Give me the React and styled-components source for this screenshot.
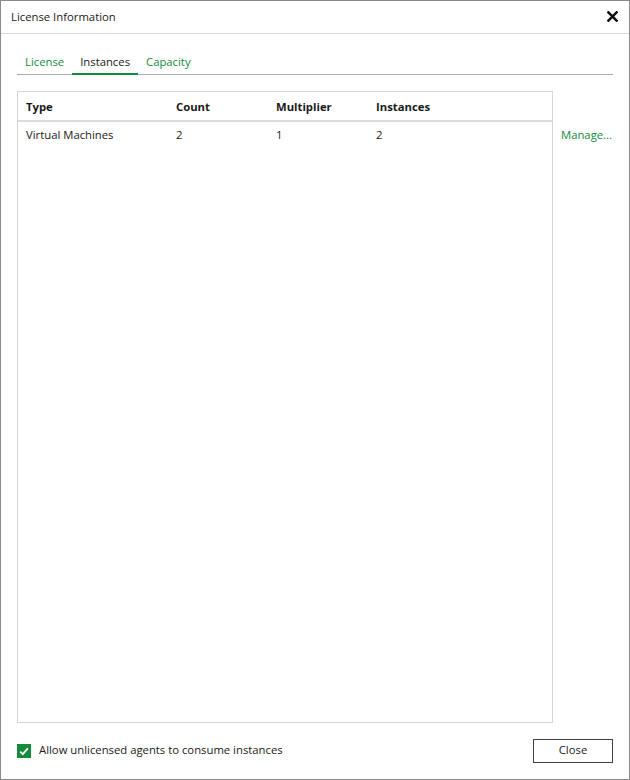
import React from "react";
import styled, { createGlobalStyle } from "styled-components";

const GREEN = "#138a3a";

const Global = createGlobalStyle`
  html, body { margin: 0; padding: 0; background: #fff; }
  * { box-sizing: border-box; }
  body { font-family: "Open Sans", "Noto Sans", sans-serif; font-size: 11.3px; color: #1a1a1a; }
`;

const Window = styled.div`
  width: 630px;
  height: 780px;
  border: 1px solid #8a8a8a;
  display: flex;
  flex-direction: column;
  background: #fff;
`;

const TitleBar = styled.div`
  height: 33px;
  flex: none;
  border-bottom: 1px solid #d9d9d9;
  display: flex;
  align-items: center;
  justify-content: space-between;
  padding: 0 11px 2px 10px;
`;

const Title = styled.span`
  color: #1a1a1a;
`;

const CloseX = styled.button`
  border: none;
  background: none;
  padding: 0;
  width: 11px;
  height: 11px;
  display: flex;
  cursor: pointer;
`;

const Body = styled.div`
  flex: 1;
  display: flex;
  flex-direction: column;
  padding: 18px 16px 0 16px;
  min-height: 0;
`;

const Tabs = styled.div`
  display: flex;
  border-bottom: 1px solid #ababab;
  height: 23px;
  flex: none;
`;

const Tab = styled.div`
  padding: 0 8px;
  height: 23px;
  line-height: 20px;
  color: ${(p) => (p.$active ? "#1a1a1a" : GREEN)};
  border-bottom: 2px solid ${(p) => (p.$active ? GREEN : "transparent")};
  margin-bottom: -1px;
  cursor: pointer;
`;

const Main = styled.div`
  flex: 1;
  display: flex;
  gap: 8px;
  margin-top: 16px;
  min-height: 0;
`;

const Table = styled.div`
  width: 536px;
  flex: none;
  border: 1px solid #d4d4d4;
  display: flex;
  flex-direction: column;
`;

const Row = styled.div`
  display: grid;
  grid-template-columns: 150px 100px 100px 1fr;
  align-items: center;
  padding-left: 8px;
  padding-top: ${(p) => (p.$header ? "0" : "2px")};
  height: ${(p) => (p.$header ? "30px" : "23px")};
  border-bottom: ${(p) => (p.$header ? "2px solid #dcdcdc" : "none")};
  font-weight: ${(p) => (p.$header ? 700 : 400)};
  flex: none;
`;

const Cell = styled.span`
  white-space: nowrap;
`;

const Side = styled.div`
  padding-top: 33px;
`;

const Link = styled.a`
  color: ${GREEN};
  text-decoration: none;
  cursor: pointer;
  display: block;
  line-height: 22px;
`;

const Footer = styled.div`
  flex: none;
  height: 56px;
  display: flex;
  align-items: center;
  justify-content: space-between;
`;

const CheckLabel = styled.label`
  display: flex;
  align-items: center;
  gap: 8px;
  line-height: 14px;
`;

const Text = styled.span`
  margin-top: -3px;
`;

const Box = styled.span`
  width: 14px;
  height: 14px;
  background: #158a3b;
  display: flex;
  align-items: center;
  justify-content: center;
`;

const Button = styled.button`
  width: 80px;
  height: 24px;
  border: 1px solid #3f3f3f;
  background: #fff;
  font-family: inherit;
  font-size: 11.3px;
  color: #1a1a1a;
  padding: 0 0 3px;
`;

export default function App() {
  const rows = [["Virtual Machines", "2", "1", "2"]];
  return (
    <>
      <Global />
      <Window>
        <TitleBar>
          <Title>License Information</Title>
          <CloseX aria-label="Close">
            <svg width="11" height="11" viewBox="0 0 11 11">
              <path d="M1.4 1.4 L9.6 9.6 M9.6 1.4 L1.4 9.6" stroke="#111" strokeWidth="2.5" strokeLinecap="square" />
            </svg>
          </CloseX>
        </TitleBar>
        <Body>
          <Tabs>
            <Tab>License</Tab>
            <Tab $active>Instances</Tab>
            <Tab>Capacity</Tab>
          </Tabs>
          <Main>
            <Table>
              <Row $header>
                <Cell>Type</Cell>
                <Cell>Count</Cell>
                <Cell>Multiplier</Cell>
                <Cell>Instances</Cell>
              </Row>
              {rows.map((r) => (
                <Row key={r[0]}>
                  {r.map((c, i) => (
                    <Cell key={i}>{c}</Cell>
                  ))}
                </Row>
              ))}
            </Table>
            <Side>
              <Link>Manage...</Link>
            </Side>
          </Main>
          <Footer>
            <CheckLabel>
              <Box>
                <svg width="10" height="9" viewBox="0 0 10 9">
                  <path d="M1.2 4.6 L3.8 7.2 L8.8 1.4" stroke="#fff" strokeWidth="1.8" fill="none" />
                </svg>
              </Box>
              <Text>Allow unlicensed agents to consume instances</Text>
            </CheckLabel>
            <Button>Close</Button>
          </Footer>
        </Body>
      </Window>
    </>
  );
}
